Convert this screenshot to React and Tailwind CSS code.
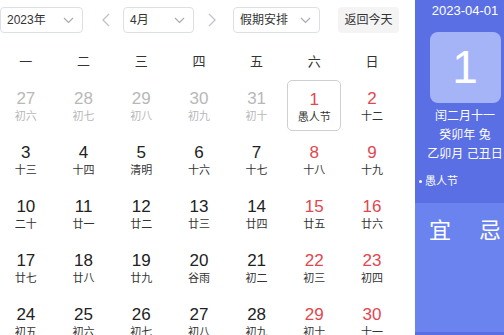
const weeks = ['一', '二', '三', '四', '五', '六', '日']

const rows = [
  [['27', '初六', 'o'], ['28', '初七', 'o'], ['29', '初八', 'o'], ['30', '初九', 'o'], ['31', '初十', 'o'], ['1', '愚人节', 'sel'], ['2', '十二', 'r']],
  [['3', '十三'], ['4', '十四'], ['5', '清明'], ['6', '十六'], ['7', '十七'], ['8', '十八', 'r'], ['9', '十九', 'r']],
  [['10', '二十'], ['11', '廿一'], ['12', '廿二'], ['13', '廿三'], ['14', '廿四'], ['15', '廿五', 'r'], ['16', '廿六', 'r']],
  [['17', '廿七'], ['18', '廿八'], ['19', '廿九'], ['20', '谷雨'], ['21', '初二'], ['22', '初三', 'r'], ['23', '初四', 'r']],
  [['24', '初五'], ['25', '初六'], ['26', '初七'], ['27', '初八'], ['28', '初九'], ['29', '初十', 'r'], ['30', '十一', 'r']],
]

function Down() {
  return (
    <svg width="11" height="7" viewBox="0 0 11 7" fill="none" stroke="#a8abb2" strokeWidth="1.2">
      <path d="M1 1l4.5 4.5L10 1" />
    </svg>
  )
}

function Select({ label, w }) {
  return (
    <div className={`${w} h-[26px] shrink-0 rounded-[4px] border border-[#dcdfe6] bg-white flex items-center justify-between pl-[6px] pr-[8px] text-[12px] text-[#333]`}>
      <span>{label}</span>
      <Down />
    </div>
  )
}

function Side({ d }) {
  return (
    <svg width="10" height="14" viewBox="0 0 10 14" fill="none" stroke="#c0c4cc" strokeWidth="1.4">
      <path d={d} />
    </svg>
  )
}

function Cell({ n, l, t }) {
  const numColor = t === 'o' ? 'text-[#b8b8b8]' : t === 'r' || t === 'sel' ? 'text-[#e2474f]' : 'text-[#222]'
  const lunColor = t === 'o' ? 'text-[#b8b8b8]' : 'text-[#333]'
  return (
    <div className="h-[54px] flex justify-center">
      <div className={`w-[54px] h-[51px] rounded-[5px] flex flex-col items-center pt-[9px] ${t === 'sel' ? 'border border-[#cfcfcf]' : ''}`}>
        <div className={`text-[17px] leading-[20px] ${numColor}`}>{n}</div>
        <div className={`text-[11px] leading-[14px] ${lunColor}`}>{l}</div>
      </div>
    </div>
  )
}

export default function App() {
  return (
    <div className="w-[504px] h-[335px] overflow-hidden flex bg-white" style={{ fontFamily: '"Liberation Sans", "Noto Sans CJK SC", sans-serif' }}>
      <div className="w-[415px] shrink-0">
        <div className="flex items-center mt-[7px] h-[26px]">
          <Select label="2023年" w="w-[83px]" />
          <div className="ml-[18px] mr-[12px] w-[10px] flex justify-center"><Side d="M8 1L2 7l6 6" /></div>
          <Select label="4月" w="w-[71px]" />
          <div className="ml-[13px] mr-[16px] w-[10px] flex justify-center"><Side d="M2 1l6 6-6 6" /></div>
          <Select label="假期安排" w="w-[87px]" />
          <div className="ml-[18px] w-[61px] h-[26px] rounded-[4px] bg-[#f4f4f5] flex items-center justify-center text-[12px] text-[#333]">返回今天</div>
        </div>
        <div className="ml-[-3px] mt-[11px] grid grid-cols-[repeat(7,57.7px)]">
          {weeks.map(w => (
            <div key={w} className="h-[36px] flex items-center justify-center text-[13px] text-[#333]">{w}</div>
          ))}
          {rows.flat().map(([n, l, t], i) => (
            <Cell key={i} n={n} l={l} t={t} />
          ))}
        </div>
      </div>
      <div className="w-[100px] shrink-0 flex flex-col text-white">
        <div className="bg-[#5a6fe3] h-[203px] flex flex-col items-center">
          <div className="mt-[3px] text-[13px] leading-[15px]">2023-04-01</div>
          <div className="mt-[14px] w-[71px] h-[71px] rounded-[8px] bg-[#a5b4f7] flex items-center justify-center text-[46px]">1</div>
          <div className="mt-[4px] text-[12px] leading-[19px] text-center">
            <div>闰二月十一</div>
            <div>癸卯年 兔</div>
            <div>乙卯月 己丑日</div>
          </div>
          <div className="self-start ml-[4px] mt-[10px] text-[11px] leading-[14px] flex items-center gap-[3px]">
            <span className="w-[3px] h-[3px] rounded-full bg-white"></span>
            <span>愚人节</span>
          </div>
        </div>
        <div className="bg-[#6b83ee] h-[129px] flex pt-[15px]">
          <div className="w-1/2 text-center text-[22px] leading-[26px]">宜</div>
          <div className="w-1/2 text-center text-[22px] leading-[26px]">忌</div>
        </div>
        <div className="bg-[#5a6fe3] flex-1"></div>
      </div>
    </div>
  )
}
